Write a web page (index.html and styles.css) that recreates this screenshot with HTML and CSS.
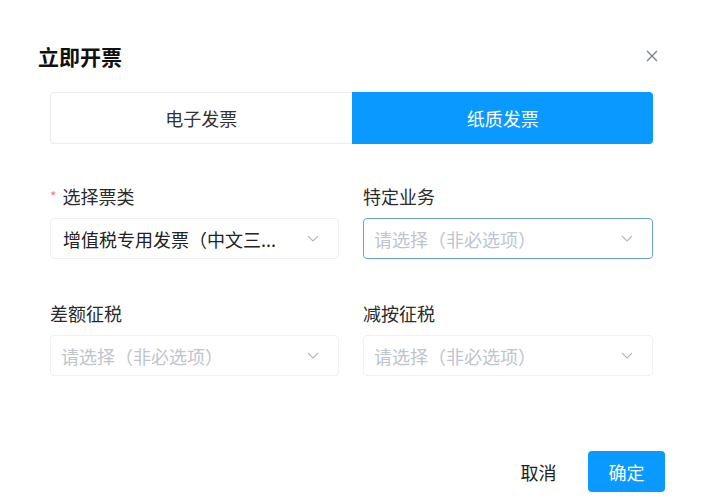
FILE: index.html
```html
<!DOCTYPE html>
<html lang="zh-CN">
<head>
    <meta charset="UTF-8">
    <meta name="viewport" content="width=device-width, initial-scale=1.0">
    <title>立即开票</title>
    <link rel="stylesheet" href="styles.css">
</head>
<body>
    <div class="dialog">
        <div class="dialog-header">
            <h2>立即开票</h2>
            <span class="close">
                <svg width="12" height="12" viewBox="0 0 12 12"><path d="M1 1L11 11M11 1L1 11" stroke="#7d8591" stroke-width="1.4" fill="none"/></svg>
            </span>
        </div>

        <div class="tabs">
            <div class="tab">电子发票</div>
            <div class="tab active">纸质发票</div>
        </div>

        <div class="invoice-form">
            <div class="form-group">
                <label><span class="required">*</span>选择票类</label>
                <div class="select">
                    <span class="value">增值税专用发票（中文三...</span>
                    <svg class="arrow" width="12" height="7" viewBox="0 0 12 7"><path d="M1 1L6 6L11 1" stroke="#b4b8bf" stroke-width="1.2" fill="none"/></svg>
                </div>
            </div>

            <div class="form-group">
                <label>特定业务</label>
                <div class="select focused">
                    <span class="placeholder">请选择（非必选项）</span>
                    <svg class="arrow" width="12" height="7" viewBox="0 0 12 7"><path d="M1 1L6 6L11 1" stroke="#b4b8bf" stroke-width="1.2" fill="none"/></svg>
                </div>
            </div>

            <div class="form-group">
                <label>差额征税</label>
                <div class="select">
                    <span class="placeholder">请选择（非必选项）</span>
                    <svg class="arrow" width="12" height="7" viewBox="0 0 12 7"><path d="M1 1L6 6L11 1" stroke="#b4b8bf" stroke-width="1.2" fill="none"/></svg>
                </div>
            </div>

            <div class="form-group">
                <label>减按征税</label>
                <div class="select">
                    <span class="placeholder">请选择（非必选项）</span>
                    <svg class="arrow" width="12" height="7" viewBox="0 0 12 7"><path d="M1 1L6 6L11 1" stroke="#b4b8bf" stroke-width="1.2" fill="none"/></svg>
                </div>
            </div>
        </div>

        <div class="dialog-footer">
            <button class="btn">取消</button>
            <button class="btn primary">确定</button>
        </div>
    </div>
</body>
</html>
```

FILE: styles.css
```css
body {
    font-family: "Noto Sans CJK SC", "Noto Sans", sans-serif;
    background-color: #ffffff;
    color: #333333;
    margin: 0;
}
.dialog {
    width: 705px;
    height: 500px;
    padding-top: 36px;
    box-sizing: border-box;
}
.dialog-header {
    display: flex;
    justify-content: space-between;
    align-items: center;
    height: 40px;
    padding: 0 47px 0 38px;
}
.dialog-header h2 {
    margin: 0;
    font-size: 21px;
    font-weight: bold;
    color: #111111;
}
.close {
    display: flex;
}
.tabs {
    display: flex;
    height: 52px;
    margin: 16px 52px 0 50px;
}
.tab {
    flex: 1;
    display: flex;
    align-items: center;
    justify-content: center;
    font-size: 18px;
    color: #333333;
    border: 1px solid #ececec;
    border-right: none;
    border-radius: 4px 0 0 4px;
}
.tab.active {
    background-color: #0a99ff;
    border-color: #0a99ff;
    color: #ffffff;
    border-radius: 0 4px 4px 0;
}
.invoice-form {
    display: grid;
    grid-template-columns: 289px 290px;
    column-gap: 24px;
    row-gap: 43px;
    margin: 41px 52px 0 50px;
}
.form-group {
    display: flex;
    flex-direction: column;
}
.form-group label {
    height: 24px;
    line-height: 22px;
    font-size: 18px;
    color: #2b2b2b;
    margin-bottom: 9px;
}
.required {
    color: #f07c82;
    font-size: 14px;
    margin-right: 6px;
    vertical-align: top;
}
.select {
    display: flex;
    align-items: center;
    justify-content: space-between;
    height: 41px;
    box-sizing: border-box;
    padding: 0 19px 0 12px;
    border: 1px solid #f0f0f0;
    border-radius: 4px;
    font-size: 18px;
}
.select.focused {
    border-color: #6aa3d8;
}
.value {
    color: #222222;
}
.placeholder {
    color: #c0c4cc;
    margin-left: -2px;
}
.dialog-footer {
    display: flex;
    justify-content: flex-end;
    gap: 11px;
    margin: 75px 40px 0 0;
}
.btn {
    width: 77px;
    height: 41px;
    font-family: inherit;
    font-size: 18px;
    color: #222222;
    background-color: #ffffff;
    border: none;
    border-radius: 4px;
    cursor: pointer;
}
.btn.primary {
    background-color: #0a99ff;
    color: #ffffff;
}
```
